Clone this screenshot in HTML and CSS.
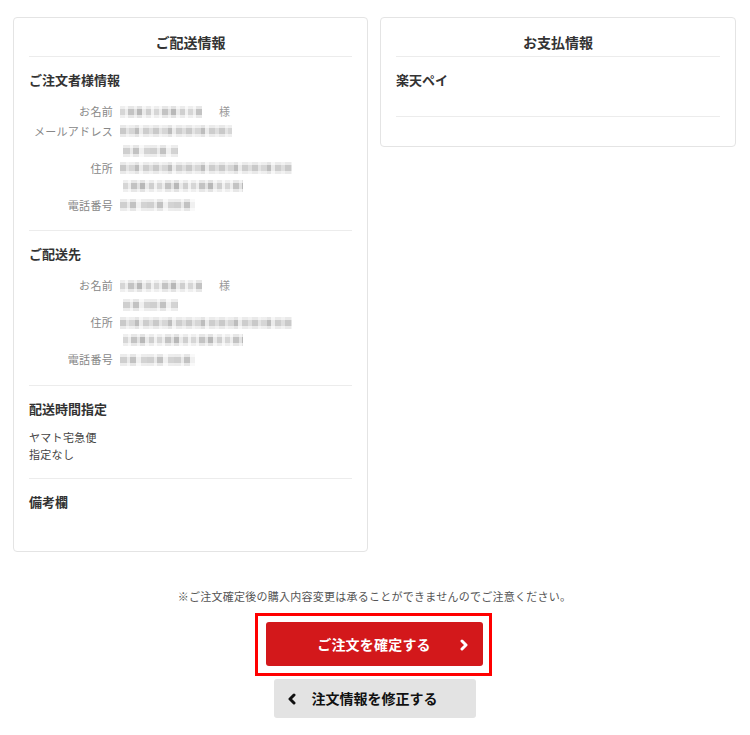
FILE: index.html
```html
<!DOCTYPE html>
<html lang="ja">
<head>
<meta charset="utf-8">
<title>ご注文内容の確認</title>
<link rel="stylesheet" href="styles.css">
</head>
<body>
<div class="page">
  <div class="columns">
    <div class="card">
      <div class="card-title">ご配送情報</div>
      <div class="section">
        <div class="sec-head">ご注文者様情報</div>
        <div class="info">
          <div class="row">
            <div class="label">お名前</div>
            <div class="value"><div class="line"><span class="mosaic w82 m1"></span><span class="sama">様</span></div></div>
          </div>
          <div class="row">
            <div class="label">メールアドレス</div>
            <div class="value"><div class="line"><span class="mosaic w112 m2"></span></div></div>
          </div>
          <div class="row">
            <div class="label">住所</div>
            <div class="value">
              <div class="line"><span class="mosaic w55 m3 ind"></span></div>
              <div class="line"><span class="mosaic w172 m2"></span></div>
              <div class="line"><span class="mosaic w120 m1 ind"></span></div>
            </div>
          </div>
          <div class="row">
            <div class="label">電話番号</div>
            <div class="value"><div class="line"><span class="mosaic w75 m3"></span></div></div>
          </div>
        </div>
      </div>
      <div class="section">
        <div class="sec-head">ご配送先</div>
        <div class="info">
          <div class="row">
            <div class="label">お名前</div>
            <div class="value"><div class="line"><span class="mosaic w82 m1"></span><span class="sama">様</span></div></div>
          </div>
          <div class="row">
            <div class="label">住所</div>
            <div class="value">
              <div class="line"><span class="mosaic w55 m3 ind"></span></div>
              <div class="line"><span class="mosaic w172 m2"></span></div>
              <div class="line"><span class="mosaic w120 m1 ind"></span></div>
            </div>
          </div>
          <div class="row">
            <div class="label">電話番号</div>
            <div class="value"><div class="line"><span class="mosaic w75 m3"></span></div></div>
          </div>
        </div>
      </div>
      <div class="section">
        <div class="sec-head">配送時間指定</div>
        <div class="plain">
          <div>ヤマト宅急便</div>
          <div>指定なし</div>
        </div>
      </div>
      <div class="section last">
        <div class="sec-head">備考欄</div>
      </div>
    </div>
    <div class="card pay">
      <div class="card-title">お支払情報</div>
      <div class="section pay-sec">
        <div class="sec-head">楽天ペイ</div>
      </div>
    </div>
  </div>

  <p class="note">※ご注文確定後の購入内容変更は承ることができませんのでご注意ください。</p>

  <div class="actions">
    <div class="highlight">
      <button class="btn-confirm" type="button">ご注文を確定する
        <svg class="chev-r" width="10" height="12" viewBox="0 0 10 12"><polyline points="3,2 7,6 3,10" fill="none" stroke="#fff" stroke-width="3" stroke-linecap="round" stroke-linejoin="round"/></svg>
      </button>
    </div>
    <button class="btn-back" type="button">
      <svg class="chev-l" width="10" height="12" viewBox="0 0 10 12"><polyline points="7,2 3,6 7,10" fill="none" stroke="#111" stroke-width="3" stroke-linecap="round" stroke-linejoin="round"/></svg>
      注文情報を修正する
    </button>
  </div>
</div>
</body>
</html>
```

FILE: styles.css
```css
* { box-sizing: border-box; }
html, body { margin: 0; padding: 0; background: #fff; }
body {
  font-family: "Noto Sans CJK JP", "Noto Sans", sans-serif;
  color: #333;
  width: 750px;
}
.page { padding: 17px 14px 0 13px; }
.columns {
  display: grid;
  grid-template-columns: 355px 356px;
  column-gap: 12px;
  align-items: start;
}
.card {
  border: 1px solid #e4e4e4;
  border-radius: 4px;
  padding: 0 15px;
  background: #fff;
}
.card-title {
  font-size: 14px;
  font-weight: bold;
  line-height: 20px;
  text-align: center;
  padding: 14px 0 4px;
  border-bottom: 1px solid #ececec;
  color: #333;
}
.section {
  padding: 13px 0 15px;
  border-bottom: 1px solid #ececec;
}
.section.last { border-bottom: none; padding-bottom: 39px; }
.sec-head {
  font-size: 13px;
  font-weight: bold;
  line-height: 20px;
  color: #333;
}
.info { margin-top: 12px; }
.row {
  display: flex;
  align-items: center;
  padding: 1px 0;
}
.label {
  width: 84px;
  flex: none;
  text-align: right;
  font-size: 11px;
  letter-spacing: 0.3px;
  line-height: 17.5px;
  color: #888;
}
.value { margin-left: 7px; }
.line {
  height: 17.5px;
  display: flex;
  align-items: center;
}
.sama {
  font-size: 11px;
  color: #999;
  margin-left: 17px;
  line-height: 17.5px;
}
.mosaic {
  display: inline-block;
  height: 12px;
  filter: blur(0.4px);
  background-image:
    linear-gradient(to bottom, rgba(255,255,255,0.6) 0 3px, rgba(255,255,255,0) 3px 9px, rgba(255,255,255,0.6) 9px 12px),
    repeating-linear-gradient(90deg, #d6d6d6 0 5px, #ededed 5px 8px, #c3c3c3 8px 14px, #e2e2e2 14px 17px, #b8b8b8 17px 22px, #eaeaea 22px 26px, #cfcfcf 26px 31px, #f1f1f1 31px 34px);
}
.mosaic.m2 {
  background-image:
    linear-gradient(to bottom, rgba(255,255,255,0.6) 0 3px, rgba(255,255,255,0) 3px 9px, rgba(255,255,255,0.6) 9px 12px),
    repeating-linear-gradient(90deg, #c9c9c9 0 6px, #e4e4e4 6px 9px, #d6d6d6 9px 15px, #bdbdbd 15px 19px, #ebebeb 19px 23px, #cdcdcd 23px 29px, #dedede 29px 33px);
}
.mosaic.m3 {
  background-image:
    linear-gradient(to bottom, rgba(255,255,255,0.6) 0 3px, rgba(255,255,255,0) 3px 9px, rgba(255,255,255,0.6) 9px 12px),
    repeating-linear-gradient(90deg, #cfcfcf 0 7px, #e9e9e9 7px 10px, #c2c2c2 10px 16px, #f0f0f0 16px 21px, #d3d3d3 21px 27px);
}
.mosaic.ind { margin-left: 3px; }
.w55 { width: 55px; }
.w75 { width: 75px; }
.w82 { width: 82px; }
.w112 { width: 112px; }
.w120 { width: 120px; }
.w172 { width: 172px; }
.plain {
  margin-top: 10px;
  font-size: 11px;
  letter-spacing: 0.3px;
  line-height: 17px;
  color: #444;
}
.pay { padding-bottom: 29px; }
.pay-sec { padding-bottom: 26px; }
.note {
  margin: 36px 0 0;
  text-align: center;
  font-size: 11px;
  letter-spacing: 0.25px;
  line-height: 16px;
  color: #555;
}
.actions {
  display: flex;
  flex-direction: column;
  align-items: center;
  margin-top: 9px;
}
.highlight {
  border: 3px solid #ff0000;
  padding: 6px 6px 7px 8px;
  margin-left: -3px;
}
.btn-confirm {
  position: relative;
  display: block;
  width: 217px;
  height: 44px;
  border: none;
  border-radius: 3px;
  background: #d3181b;
  color: #fff;
  font-family: inherit;
  font-size: 14px;
  font-weight: bold;
  letter-spacing: 0.2px;
  padding: 0;
  margin: 0;
}
.chev-r {
  position: absolute;
  right: 14px;
  top: 17px;
}
.btn-back {
  position: relative;
  display: block;
  width: 202px;
  height: 39px;
  margin-top: 3px;
  border: none;
  border-radius: 3px;
  background: #e3e3e3;
  color: #111;
  font-family: inherit;
  font-size: 14px;
  font-weight: bold;
  padding: 0;
}
.chev-l {
  position: absolute;
  left: 13px;
  top: 14px;
}
```
